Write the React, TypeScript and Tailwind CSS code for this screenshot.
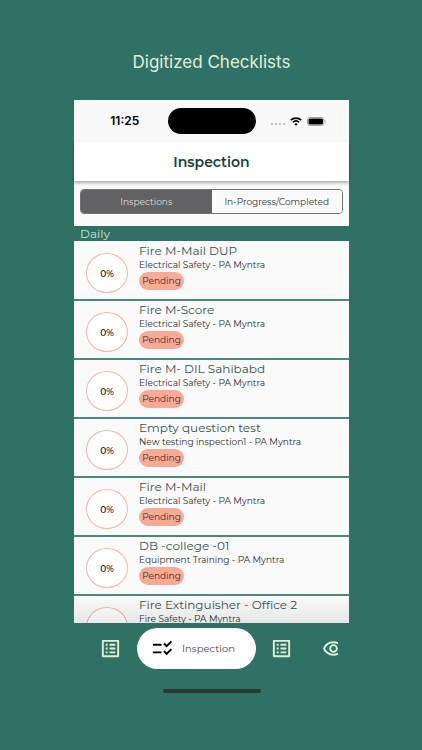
import { useState } from 'react';
import { MdChecklistRtl, MdOutlineListAlt, MdOutlineRemoveRedEye } from 'react-icons/md';

interface Inspection {
  id: number;
  title: string;
  site: string;
  progress: number;
  status: string;
}

const inspections: Inspection[] = [
  { id: 1, title: 'Fire M-Mail DUP', site: 'Electrical Safety - PA Myntra', progress: 0, status: 'Pending' },
  { id: 2, title: 'Fire M-Score', site: 'Electrical Safety - PA Myntra', progress: 0, status: 'Pending' },
  { id: 3, title: 'Fire M- DIL Sahibabd', site: 'Electrical Safety - PA Myntra', progress: 0, status: 'Pending' },
  { id: 4, title: 'Empty question test', site: 'New testing inspection1 - PA Myntra', progress: 0, status: 'Pending' },
  { id: 5, title: 'Fire M-Mail', site: 'Electrical Safety - PA Myntra', progress: 0, status: 'Pending' },
  { id: 6, title: 'DB -college -01', site: 'Equipment Training - PA Myntra', progress: 0, status: 'Pending' },
  { id: 7, title: 'Fire Extinguisher - Office 2', site: 'Fire Safety - PA Myntra', progress: 0, status: 'Pending' },
];

function StatusBar() {
  return (
    <div className="grid h-[42px] grid-cols-[1fr_88px_1fr] items-center bg-[#f9f9f9]">
      <span className="pl-2 text-center font-['Inter',sans-serif] text-[12px] font-semibold text-black">11:25</span>
      <div className="h-[26px] rounded-full bg-black" />
      <div className="flex items-center gap-[5px] pl-[15px]">
        <div className="flex gap-[2px] pt-[6px]">
          {[0, 1, 2, 3].map(dot => (
            <span key={dot} className="h-[2px] w-[2px] bg-[#c2c2c2]" />
          ))}
        </div>
        <svg viewBox="0 0 12 9" className="h-[9px] w-3" fill="none" stroke="#000">
          <path d="M0.8 3.2C3.8 0.4 8.2 0.4 11.2 3.2" strokeWidth="1.6" />
          <path d="M2.8 5.3C4.7 3.6 7.3 3.6 9.2 5.3" strokeWidth="1.5" />
          <path d="M4.2 7L6 8.8L7.8 7C6.8 6.1 5.2 6.1 4.2 7Z" fill="#000" stroke="none" />
        </svg>
        <svg viewBox="0 0 19 9" className="h-[9px] w-[19px]">
          <rect x="0.5" y="0.5" width="16.5" height="8" rx="2.5" fill="#fff" stroke="#a3a3a3" />
          <rect x="1.5" y="1.5" width="14.5" height="6" rx="1.6" fill="#000" />
          <path d="M17.8 3V6C18.9 5.6 18.9 3.4 17.8 3Z" fill="#a3a3a3" />
        </svg>
      </div>
    </div>
  );
}

function InspectionRow({ item }: { item: Inspection }) {
  return (
    <li className="flex h-[59px] border-b-2 border-[#4b877b] bg-[#fafafa] pl-3">
      <div className="mt-[11px] flex h-10 w-[42px] shrink-0 items-center justify-center rounded-[50%] border border-[#f5b5a6] bg-white text-[9px] leading-[11px] font-medium text-black">
        {item.progress}%
      </div>
      <div className="ml-[11px] min-w-0 pt-px">
        <h2 className="truncate text-[12px] leading-[16px] text-[#31544d]">{item.title}</h2>
        <p className="truncate text-[9px] leading-[11px] text-[#2e2e2e]">{item.site}</p>
        <span className="mt-[2px] flex h-[18px] w-[45px] items-center justify-center rounded-full bg-[#f8aa97] text-[9px] text-[#3f2a26]">
          {item.status}
        </span>
      </div>
    </li>
  );
}

export default function App() {
  const [tab, setTab] = useState('inspections');

  return (
    <div className="min-h-screen bg-[#307166] pt-[50px] pr-[73px] pb-14 pl-[74px] font-['Montserrat','Inter',sans-serif]">
      <h1 className="text-center font-['Inter',sans-serif] text-[17px] leading-[25px] text-[#e2efd5]">
        Digitized Checklists
      </h1>

      <main className="mt-[25px]">
        <StatusBar />
        <header className="relative flex h-[39px] items-center justify-center bg-white shadow-[0_2px_3px_rgba(0,0,0,0.3)]">
          <h2 className="text-[14px] leading-[20px] font-semibold text-[#203f39]">Inspection</h2>
        </header>

        <div className="bg-[#fafafa] px-[6px] pt-2 pb-3">
          <div className="grid h-[25px] grid-cols-2 overflow-hidden rounded-[4px] border border-[#737373] text-[9px]">
            <button
              type="button"
              onClick={() => setTab('inspections')}
              className={tab === 'inspections' ? 'bg-[#626264] text-[#dedede]' : 'bg-[#fafafa] text-[#333333]'}
            >
              Inspections
            </button>
            <button
              type="button"
              onClick={() => setTab('completed')}
              className={tab === 'completed' ? 'bg-[#626264] text-[#dedede]' : 'bg-[#fafafa] text-[#333333]'}
            >
              In-Progress/Completed
            </button>
          </div>
        </div>

        <h3 className="pl-[6px] text-[12px] leading-[15px] text-[#c5e3cb]">Daily</h3>

        <div className="relative h-[382px] overflow-hidden bg-[#fafafa] pt-px">
          <ul>
            {inspections.map(item => (
              <InspectionRow key={item.id} item={item} />
            ))}
          </ul>
          <div className="absolute inset-x-0 bottom-0 h-7 bg-linear-to-b from-transparent to-black/8" />
        </div>
      </main>

      <nav className="mt-[5px] mr-[11px] flex h-[41px] items-center overflow-hidden pl-[25px] text-[#e0f0d3]">
        <button type="button" aria-label="Reports" className="shrink-0">
          <MdOutlineListAlt size={23} />
        </button>
        <button
          type="button"
          className="ml-[15px] flex h-[41px] w-[119px] shrink-0 items-center gap-2 rounded-full bg-white pl-[14px] text-[10px] text-[#474747]"
        >
          <MdChecklistRtl size={23} color="#000" />
          Inspection
        </button>
        <button type="button" aria-label="Records" className="ml-[14px] shrink-0">
          <MdOutlineListAlt size={23} />
        </button>
        <button type="button" aria-label="Observations" className="ml-[29px] shrink-0">
          <MdOutlineRemoveRedEye size={23} />
        </button>
      </nav>

      <div className="mx-auto mt-5 h-1 w-[98px] rounded-full bg-[#2d3735]" />
    </div>
  );
}
